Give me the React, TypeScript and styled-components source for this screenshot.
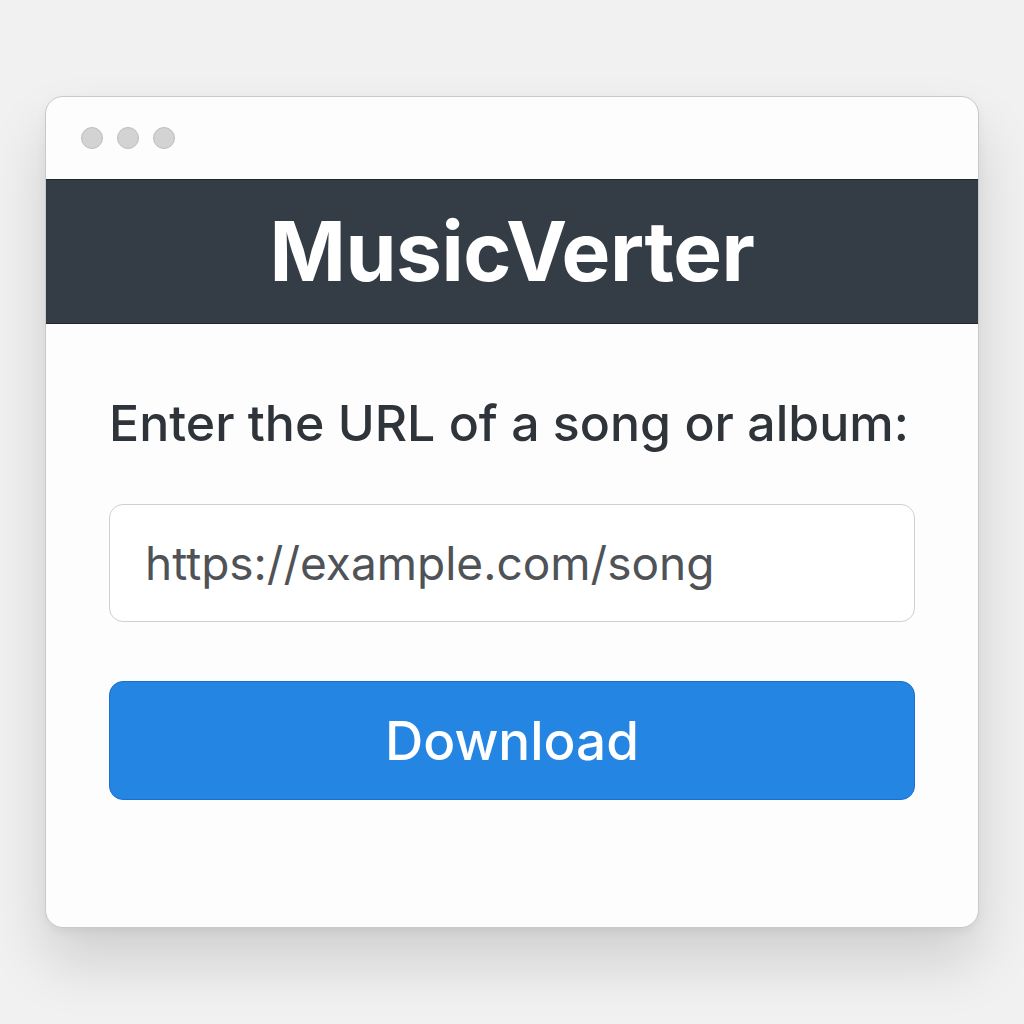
import React from "react";
import styled, { createGlobalStyle } from "styled-components";

const GlobalStyle = createGlobalStyle`
  html, body {
    margin: 0;
    padding: 0;
    background: #f1f1f1;
    font-family: Inter, "Noto Sans", sans-serif;
  }
`;

const Page = styled.div`
  width: 1024px;
  height: 1024px;
  box-sizing: border-box;
  padding: 96px 45px 0;
`;

const Window = styled.div`
  width: 934px;
  height: 832px;
  box-sizing: border-box;
  background: #fdfdfd;
  border: 1px solid #c9c9c9;
  border-radius: 18px;
  overflow: hidden;
  box-shadow: 0 34px 60px rgba(0, 0, 0, 0.14), 0 4px 10px rgba(0, 0, 0, 0.05);
  display: flex;
  flex-direction: column;
`;

const TitleBar = styled.div`
  height: 82px;
  display: flex;
  align-items: center;
  gap: 14px;
  padding-left: 35px;
  box-sizing: border-box;
`;

const Dot = styled.span`
  width: 22px;
  height: 22px;
  border-radius: 50%;
  background: #d3d3d3;
  border: 1px solid #bdbdbd;
  box-sizing: border-box;
`;

const Header = styled.header`
  height: 145px;
  background: #343d45;
  border-top: 1px solid #20262b;
  border-bottom: 1px solid #20262b;
  box-sizing: border-box;
  display: flex;
  align-items: center;
  justify-content: center;
`;

const Title = styled.h1`
  margin: 0;
  color: #ffffff;
  font-size: 82px;
  font-weight: 700;
  letter-spacing: -0.5px;
`;

const Body = styled.main`
  padding: 69px 63px 0;
  display: flex;
  flex-direction: column;
`;

const Label = styled.label`
  color: #2e343a;
  font-size: 50px;
  font-weight: 500;
  margin-bottom: 51px;
`;

const UrlInput = styled.input`
  height: 118px;
  box-sizing: border-box;
  border: 1px solid #cfcfcf;
  border-radius: 14px;
  background: #fff;
  padding: 0 35px;
  font-family: Inter, "Noto Sans", sans-serif;
  font-size: 46px;
  color: #4f5358;
  outline: none;
  margin-bottom: 59px;
`;

const DownloadButton = styled.button`
  height: 119px;
  border: 1px solid #1b6fd0;
  border-radius: 14px;
  background: #2585e2;
  color: #fff;
  font-family: Inter, "Noto Sans", sans-serif;
  font-size: 53px;
  font-weight: 500;
  cursor: pointer;
`;

export default function App() {
  return (
    <>
      <GlobalStyle />
      <Page>
        <Window>
          <TitleBar>
            <Dot />
            <Dot />
            <Dot />
          </TitleBar>
          <Header>
            <Title>MusicVerter</Title>
          </Header>
          <Body>
            <Label htmlFor="url">Enter the URL of a song or album:</Label>
            <UrlInput id="url" defaultValue="https://example.com/song" />
            <DownloadButton>Download</DownloadButton>
          </Body>
        </Window>
      </Page>
    </>
  );
}
